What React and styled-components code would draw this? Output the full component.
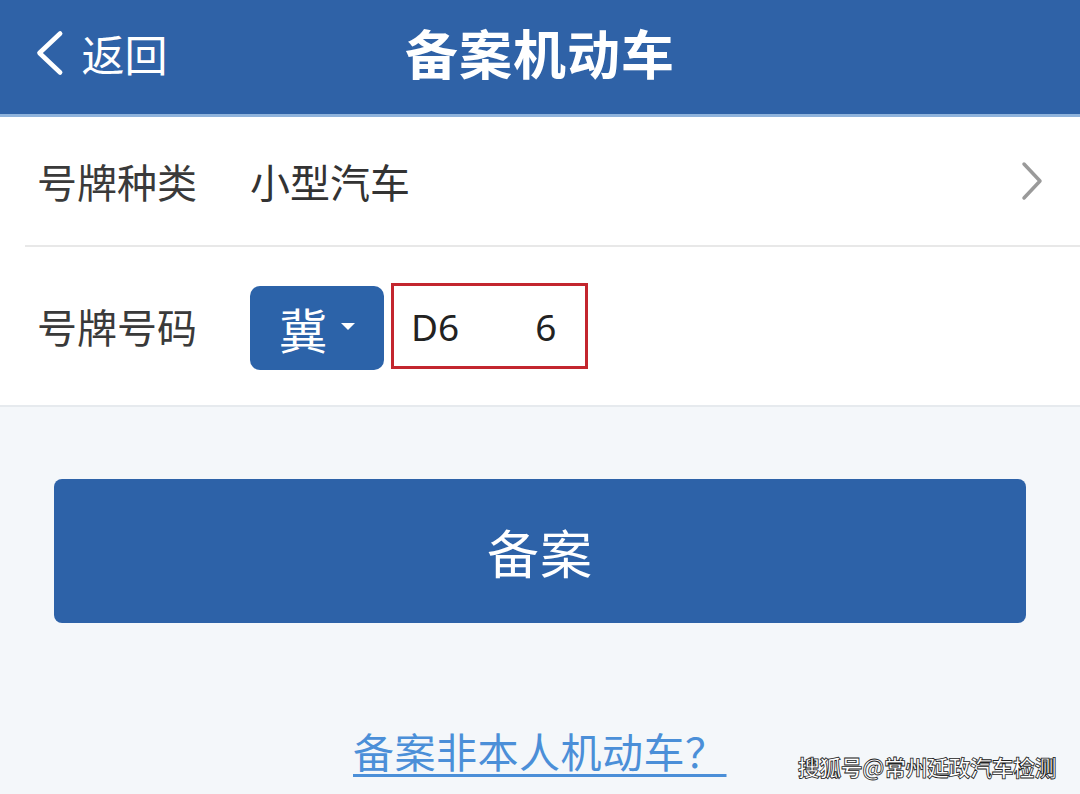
import styled, { createGlobalStyle } from "styled-components"

const GlobalStyle = createGlobalStyle`
  body {
    margin: 0;
    background: #f4f7fa;
    font-family: "Noto Sans CJK SC", "Noto Sans", sans-serif;
  }
`
const Page = styled.div`
  width: 1080px;
  height: 794px;
  overflow: hidden;
  background: #f4f7fa;
  position: relative;
`
const Header = styled.header`
  height: 114px;
  background: #2f62a7;
  border-bottom: 3px solid #8fb3dc;
  display: grid;
  grid-template-columns: 1fr auto 1fr;
  align-items: center;
  padding: 0 36px;
  color: #fff;
`
const Back = styled.div`
  display: flex;
  align-items: center;
  gap: 18px;
  font-size: 43px;
  margin-top: -8px;
`
const Title = styled.h1`
  margin: 0 0 10px;
  font-size: 53px;
  font-weight: 700;
  letter-spacing: 1px;
`
const Form = styled.section`
  background: #fff;
  border-bottom: 2px solid #e6eaee;
`
const Row = styled.div`
  display: flex;
  align-items: center;
  height: ${p => p.h}px;
  padding-right: 36px;
  padding-left: ${p => (p.divider ? "12px" : "37px")};
  margin-left: ${p => (p.divider ? "25px" : 0)};
  border-bottom: ${p => (p.divider ? "2px solid #e8e8e8" : "none")};
`
const Label = styled.span`
  width: 213px;
  font-size: 40px;
  color: #3a3a3a;
`
const Value = styled.span`
  flex: 1;
  font-size: 40px;
  color: #333;
`
const Province = styled.div`
  width: 134px;
  height: 84px;
  border-radius: 10px;
  background: #2c63a9;
  color: #fff;
  display: flex;
  align-items: center;
  justify-content: center;
  gap: 14px;
  font-size: 48px;
  margin-top: 4px;
`
const Caret = styled.span`
  width: 0;
  height: 0;
  border-left: 7px solid transparent;
  border-right: 7px solid transparent;
  border-top: 7px solid #fff;
  margin-bottom: 4px;
`
const PlateInput = styled.div`
  box-sizing: border-box;
  margin-left: 7px;
  width: 197px;
  height: 86px;
  border: 3px solid #c3262e;
  display: flex;
  align-items: center;
  padding-left: 17px;
  font-family: "Noto Sans", "Open Sans", sans-serif;
  font-size: 37px;
  color: #222;
`
const PlateChar = styled.span`
  margin-left: ${p => p.gap || 0}px;
`
const Actions = styled.div`
  padding: 72px 54px 0;
`
const SubmitButton = styled.button`
  width: 100%;
  height: 144px;
  border: none;
  border-radius: 8px;
  background: #2d62a8;
  color: #fff;
  font-family: inherit;
  font-size: 52px;
  letter-spacing: 1px;
`
const LinkRow = styled.div`
  display: flex;
  padding: 103px 0 0 353px;
`
const Link = styled.a`
  font-size: 41px;
  color: #4b8fd8;
  text-decoration: underline;
  text-underline-offset: 6px;
  text-decoration-thickness: 3px;
  line-height: 48px;
  letter-spacing: 0.5px;
`
const Watermark = styled.div`
  position: absolute;
  right: 24px;
  bottom: 12px;
  font-size: 22px;
  font-weight: 700;
  color: #fff;
  -webkit-text-stroke: 0.8px #222;
  letter-spacing: -0.5px;
`

const Chevron = ({ color, size, width }) => (
  <svg width={size * 0.6} height={size} viewBox="0 0 24 40" fill="none">
    <path d={width ? "M21 3 L3 20 L21 37" : "M4 3 L20 20 L4 37"} stroke={color} strokeWidth={width || 3.5} strokeLinecap="round" strokeLinejoin="round" />
  </svg>
)

const App = () => {
  return (
    <Page>
      <GlobalStyle />
      <Header>
        <Back>
          <Chevron color="#fff" size={46} width={4} />
          返回
        </Back>
        <Title>备案机动车</Title>
        <div />
      </Header>
      <Form>
        <Row h={128} divider>
          <Label>号牌种类</Label>
          <Value>小型汽车</Value>
          <Chevron color="#9a9a9a" size={40} />
        </Row>
        <Row h={158}>
          <Label>号牌号码</Label>
          <Province>
            冀<Caret />
          </Province>
          <PlateInput>
            <PlateChar>D6</PlateChar>
            <PlateChar gap={76}>6</PlateChar>
          </PlateInput>
        </Row>
      </Form>
      <Actions>
        <SubmitButton>备案</SubmitButton>
      </Actions>
      <LinkRow>
        <Link>备案非本人机动车？</Link>
      </LinkRow>
      <Watermark>搜狐号@常州延政汽车检测</Watermark>
    </Page>
  )
}

export default App
